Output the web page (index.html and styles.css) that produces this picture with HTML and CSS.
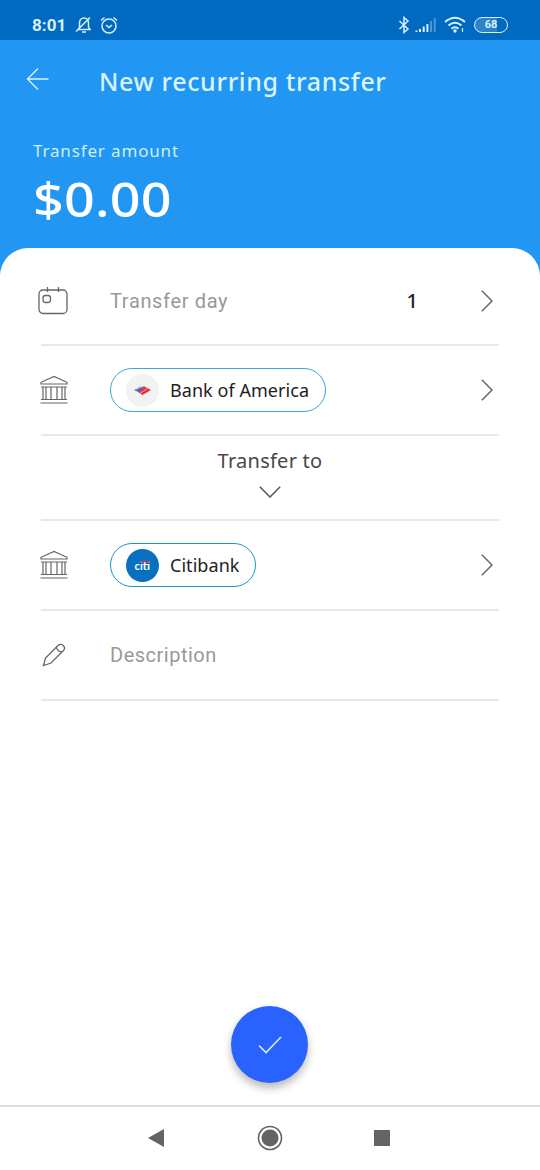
FILE: index.html
```html
<!DOCTYPE html>
<html lang="en">
<head>
<meta charset="utf-8">
<title>New recurring transfer</title>
<link rel="stylesheet" href="styles.css">
</head>
<body>
<svg class="defs" width="0" height="0">
  <symbol id="bank" viewBox="0 0 28 30"><path d="M1 9V7.300L14 1.500l13 5.800V9zM1 12h26M1 24.500h26M.5 28h27M3 12v12.500M6 12v12.500M11 12v12.500M17 12v12.500M22 12v12.500M25 12v12.500"/></symbol>
  <symbol id="chevron" viewBox="0 0 12 22"><path d="M.8.8 11 11 .8 21.200"/></symbol>
</svg>
<div class="status">
  <span class="time">8:01</span>
  <svg class="bell" width="18" height="18" viewBox="0 0 18 18"><path d="M3 13.500h12l-1.500-2V7c0-3-2-5-4.500-5S4.500 4 4.500 7v4.500zM1 15.500 15 1.500M7 16h4"/></svg>
  <svg class="alarm" width="18" height="18" viewBox="0 0 18 18"><circle cx="9" cy="10" r="7"/><path d="M1 4.500 4.500 1.500M17 4.500l-3.500-3M6 9l3 2.500L12 9"/></svg>
  <span class="spacer"></span>
  <svg class="bt" width="12" height="18" viewBox="0 0 12 18"><path d="m1.500 5 8.500 8-4 3.500v-15L10 5l-8.500 8"/></svg>
  <svg class="signal" width="22" height="16" viewBox="0 0 22 16"><path d="M1.500 15v-1.500M5 15v-3M8.700 15V9.500M12.400 15V7"/><path class="dim" d="M16 15V4M19.700 15V1"/></svg>
  <svg class="wifi" width="22" height="18" viewBox="0 0 22 18"><path d="M1 6q10-8.500 20 0M4.500 9.500q6.500-5.500 13 0M7.500 12.700q3.500-3 7 0"/><circle cx="11" cy="15" r="1.700"/><path class="thin" d="M18.500 12v4"/></svg>
  <span class="battery">68</span>
</div>
<header class="header">
  <div class="titlebar">
    <svg class="back" width="24" height="24" viewBox="0 0 24 24"><path d="M22.500 12H1.500M12 1.500 1.500 12 12 22.500"/></svg>
    <h1 class="title">New recurring transfer</h1>
  </div>
  <div class="label">Transfer amount</div>
  <div class="amount">$0.00</div>
</header>
<main class="card">
  <div class="row first">
    <svg class="lead" width="30" height="28" viewBox="0 0 30 28"><rect x="1" y="3" width="28" height="23.500" rx="4"/><rect x="5" y="8.500" width="7.500" height="7" rx="2.500"/><path d="M9.500 0v5M20.500 0v5"/></svg>
    <span class="hint">Transfer day</span>
    <span class="day">1</span>
    <svg class="go" width="12" height="22"><use href="#chevron"/></svg>
  </div>
  <div class="row">
    <svg class="lead bank" width="28" height="30"><use href="#bank"/></svg>
    <span class="chip boa">
      <svg class="logo" width="33" height="33" viewBox="0 0 33 33"><circle cx="16.500" cy="16.500" r="16.500" fill="#f2f2f2"/><path fill="#3a62b8" d="m8 16 7-3.500 3.500 1.700-6 3.800z"/><path fill="#e3303c" d="m12 18 6-3.800-2-1.200 2-.7 7 3.700-8.500 5z"/><path stroke="#f2f2f2" stroke-width=".6" d="m14 19.200 7.500-4.700m-12 1.300 7-3"/></svg>
      Bank of America
    </span>
    <svg class="go" width="12" height="22"><use href="#chevron"/></svg>
  </div>
  <div class="row between">
    <span class="to">Transfer to</span>
    <svg class="down" width="22" height="12" viewBox="0 0 22 12"><path d="M.8.800 11 11 21.200.800"/></svg>
  </div>
  <div class="row">
    <svg class="lead bank" width="28" height="30"><use href="#bank"/></svg>
    <span class="chip citi">
      <svg class="logo" width="33" height="33" viewBox="0 0 33 33"><circle cx="16.500" cy="16.500" r="16.500" fill="#0870c0"/><text class="cititext" x="8.500" y="21.200" textLength="15.500" lengthAdjust="spacingAndGlyphs">citi</text><path fill="none" stroke="#bd3455" stroke-width="1.300" d="M15 13.500q4-4 8.500 0"/></svg>
      Citibank
    </span>
    <svg class="go" width="12" height="22"><use href="#chevron"/></svg>
  </div>
  <div class="row">
    <svg class="lead pencil" width="24" height="24" viewBox="0 0 24 24"><path d="m1.500 22.500 2-7.500L16 2.500c3.500-3 8.500 1.500 5.500 5L9 20zM14.500 4q.5 4.500 5.500 5"/></svg>
    <span class="hint desc">Description</span>
  </div>
  <button class="fab"><svg width="24" height="18" viewBox="0 0 24 18"><path d="m1 9.500 7 7L23 1"/></svg></button>
</main>
<nav class="nav">
  <svg class="prev" width="16" height="18" viewBox="0 0 16 18"><path d="M0 9 16 0v18z"/></svg>
  <svg width="26" height="26" viewBox="0 0 26 26"><circle class="ring" cx="13" cy="13" r="11.500"/><circle cx="13" cy="13" r="8.500"/></svg>
  <svg width="16" height="16" viewBox="0 0 16 16"><rect width="16" height="16" rx=".6"/></svg>
</nav>
</body>
</html>
```
FILE: styles.css
```css
* { box-sizing: border-box; }
body { margin: 0; width: 540px; height: 1170px; display: flex; flex-direction: column; background: #2196f3; font-family: "Noto Sans", sans-serif; overflow: hidden; }
svg { display: block; flex: none; fill: none; }
.defs { position: absolute; }
.status { height: 40px; flex: none; background: #0069c0; display: flex; align-items: center; padding: 9px 32px 0; color: #d9f1ff; }
.status svg { stroke: #d9f1ff; stroke-width: 1.5; }
.time { font: bold 17px Roboto, sans-serif; letter-spacing: .1px; width: 43px; }
.alarm { margin-left: 7px; }
.spacer { flex: 1; }
.signal { margin-left: 6px; }
.status .signal { stroke-width: 2; }
.signal .dim { opacity: .35; }
.wifi { margin-left: 7px; }
.wifi path { stroke-width: 2; }
.wifi .thin { stroke-width: 1.2; }
.wifi circle { fill: #d9f1ff; stroke: none; }
.battery { margin-left: 8px; width: 34px; height: 16px; border: 1.5px solid #d9f1ff; border-radius: 8px; font: bold 11px/13px Roboto, sans-serif; text-align: center; background: linear-gradient(90deg, #2d82ca 70%, #0069c0 70%); }
.bt { margin-right: -1px; }
.header { height: 208px; flex: none; color: #fff; padding: 0 26px; }
.titlebar { display: flex; align-items: center; height: 78px; }
.back { stroke: #d9f3ff; stroke-width: 1.4; }
.title { margin: 3px 0 0 49px; font: 500 25px/32px "Noto Sans", sans-serif; letter-spacing: .64px; color: #d9f3ff; white-space: nowrap; }
.label { margin: 21px 0 0 7px; font-size: 17px; line-height: 24px; letter-spacing: .85px; color: #cdefff; }
.amount { margin: 6px 0 0 7px; width: max-content; font-size: 48px; line-height: 60px; font-weight: 500; white-space: nowrap; transform: scaleX(1.12); transform-origin: 0 0; letter-spacing: .2px; }
.card { flex: 1; background: #fff; border-radius: 28px 28px 0 0; padding: 0 41px; display: flex; flex-direction: column; }
.row { height: 90px; flex: none; display: flex; align-items: center; border-bottom: 2px solid #e8e8e8; }
.row.first { height: 98px; padding-top: 9px; }
.lead { margin-left: -3px; margin-right: 42px; stroke: #666; stroke-width: 1.3; }
.lead.bank { margin-left: -1px; stroke-width: 1.2; }
.pencil { margin-left: 1px; margin-right: 44px; }
.hint { font: 20px/24px Roboto, sans-serif; letter-spacing: .65px; color: #999; }
.hint.desc { letter-spacing: .5px; }
.day { margin-left: auto; margin-right: 63px; font: 500 20px/24px "Noto Sans", sans-serif; color: #222; }
.go { margin-left: auto; margin-right: 6px; stroke: #666; stroke-width: 1.5; }
.day + .go { margin-left: 0; }
.chip { height: 44px; display: flex; align-items: center; gap: 11px; border: 1.5px solid #36a9d6; border-radius: 22px; padding: 0 15px; font-size: 18px; letter-spacing: .05px; color: #222; white-space: nowrap; }
.boa { width: 216px; }
.citi { width: 146px; border-color: #1a94c8; }
.cititext { font: bold 11px Lato, sans-serif; letter-spacing: 0; fill: #fff; }
.row.between { height: 85px; flex-direction: column; padding-top: 12px; }
.to { font-size: 20px; line-height: 26px; letter-spacing: .25px; color: #484848; }
.down { margin-top: 12px; stroke: #555; stroke-width: 1.5; }
.fab { position: relative; margin: auto auto 22px; left: -.5px; width: 77px; height: 77px; border: 0; border-radius: 50%; background: #2962ff; box-shadow: 0 5px 9px rgba(0,0,0,.28); display: flex; align-items: center; justify-content: center; padding: 0; }
.fab path { stroke: #d9f0ff; stroke-width: 1.6; }
.nav { height: 65px; flex: none; background: #fff; border-top: 2px solid #dedede; padding-bottom: 2px; display: grid; grid-template-columns: 112px 112px 112px; justify-content: center; justify-items: center; align-items: center; }
.nav svg { fill: #646464; }
.nav .prev { margin-right: 4px; }
.nav .ring { fill: none; stroke: #646464; stroke-width: 1.6; }
```
